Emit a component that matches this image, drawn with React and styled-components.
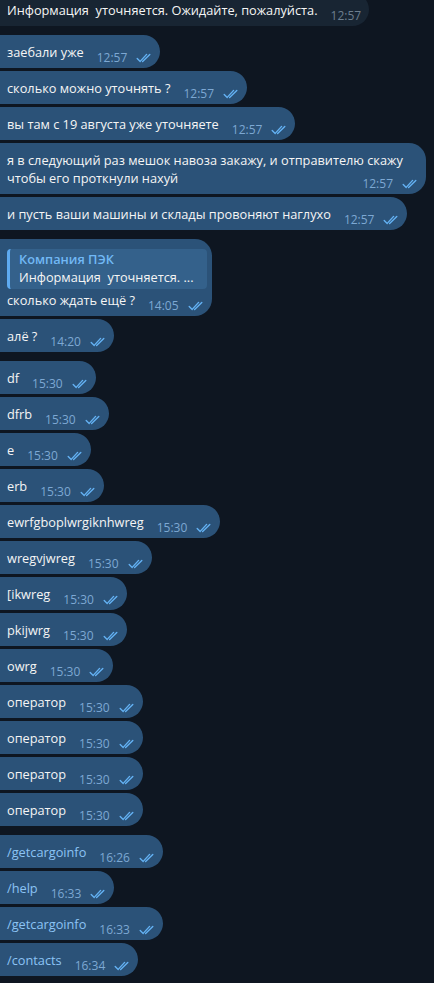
import React from "react";
import styled, { createGlobalStyle } from "styled-components";

const GlobalStyle = createGlobalStyle`
  html, body {
    margin: 0;
    padding: 0;
    background: #0e1621;
  }
  body {
    font-family: "Open Sans", "Noto Sans", sans-serif;
    -webkit-font-smoothing: antialiased;
  }
`;

const messages = [
  { text: "заебали уже", time: "12:57", group: true },
  { text: "сколько можно уточнять ?", time: "12:57" },
  { text: "вы там с 19 августа уже уточняете", time: "12:57" },
  {
    text: "я в следующий раз мешок навоза закажу, и отправителю скажу чтобы его проткнули нахуй",
    time: "12:57",
  },
  { text: "и пусть ваши машины и склады провоняют наглухо", time: "12:57" },
  {
    text: "сколько ждать ещё ?",
    time: "14:05",
    group: true,
    reply: { name: "Компания ПЭК", text: "Информация\u00a0 уточняется. ..." },
  },
  { text: "алё ?", time: "14:20" },
  { text: "df", time: "15:30", group: true },
  { text: "dfrb", time: "15:30" },
  { text: "e", time: "15:30" },
  { text: "erb", time: "15:30" },
  { text: "ewrfgboplwrgiknhwreg", time: "15:30" },
  { text: "wregvjwreg", time: "15:30" },
  { text: "[ikwreg", time: "15:30" },
  { text: "pkijwrg", time: "15:30" },
  { text: "owrg", time: "15:30" },
  { text: "оператор", time: "15:30" },
  { text: "оператор", time: "15:30" },
  { text: "оператор", time: "15:30" },
  { text: "оператор", time: "15:30" },
  { text: "/getcargoinfo", time: "16:26", group: true, command: true },
  { text: "/help", time: "16:33", command: true },
  { text: "/getcargoinfo", time: "16:33", command: true },
  { text: "/contacts", time: "16:34", command: true },
];

const DoubleCheck = () => (
  <CheckIcon viewBox="0 0 16 10" width="16" height="10">
    <path d="M1.2 5.6 L4.2 8.4 L10.6 1.4" />
    <path d="M6.6 8.4 L13.8 1.4" />
  </CheckIcon>
);

const App = () => {
  return (
    <>
      <GlobalStyle />
      <Chat>
        <Bubble $incoming>
          Информация&nbsp; уточняется. Ожидайте, пожалуйста.
          <Meta>
            <Time $incoming>12:57</Time>
          </Meta>
        </Bubble>
        {messages.map((m, i) => (
          <Bubble key={i} $group={m.group}>
            {m.reply && (
              <Quote>
                <QuoteName>{m.reply.name}</QuoteName>
                <QuoteText>{m.reply.text}</QuoteText>
              </Quote>
            )}
            {m.command ? <Command>{m.text}</Command> : m.text}
            <Meta>
              <Time>{m.time}</Time>
              <DoubleCheck />
            </Meta>
          </Bubble>
        ))}
      </Chat>
    </>
  );
};

const Chat = styled.div`
  display: flex;
  flex-direction: column;
  align-items: flex-start;
  margin-top: -7px;
`;

const Bubble = styled.div`
  display: flow-root;
  box-sizing: border-box;
  width: fit-content;
  max-width: 426px;
  margin-top: ${(p) => (p.$group ? "9px" : "3px")};
  padding: 8px 8px 3px 7px;
  border-radius: 0 17px 17px 0;
  background: ${(p) => (p.$incoming ? "#182533" : "#2b5278")};
  color: #f5f5f5;
  font-size: 12.75px;
  line-height: 18px;
  &:first-child {
    margin-top: 0;
  }
`;

const Meta = styled.span`
  float: right;
  display: flex;
  align-items: center;
  gap: 9px;
  margin: 7px 0 0 13px;
  line-height: 15px;
`;

const Time = styled.span`
  font-size: 12px;
  color: ${(p) => (p.$incoming ? "#6d7f8f" : "#7da8d3")};
`;

const CheckIcon = styled.svg`
  fill: none;
  stroke: #64b2f4;
  stroke-width: 1.4;
  stroke-linecap: round;
  stroke-linejoin: round;
  margin-top: 1px;
`;

const Command = styled.span`
  color: #8cc4f5;
`;

const Quote = styled.div`
  contain: inline-size;
  margin: 2px -3px 2px 0;
  padding: 1px 8px 3px 9px;
  border-left: 3px solid #5eaaf0;
  border-radius: 4px;
  background: #34618b;
  white-space: nowrap;
  overflow: hidden;
`;

const QuoteName = styled.div`
  color: #71b8f5;
  font-weight: 600;
`;

const QuoteText = styled.div`
  overflow: hidden;
`;

export default App;
